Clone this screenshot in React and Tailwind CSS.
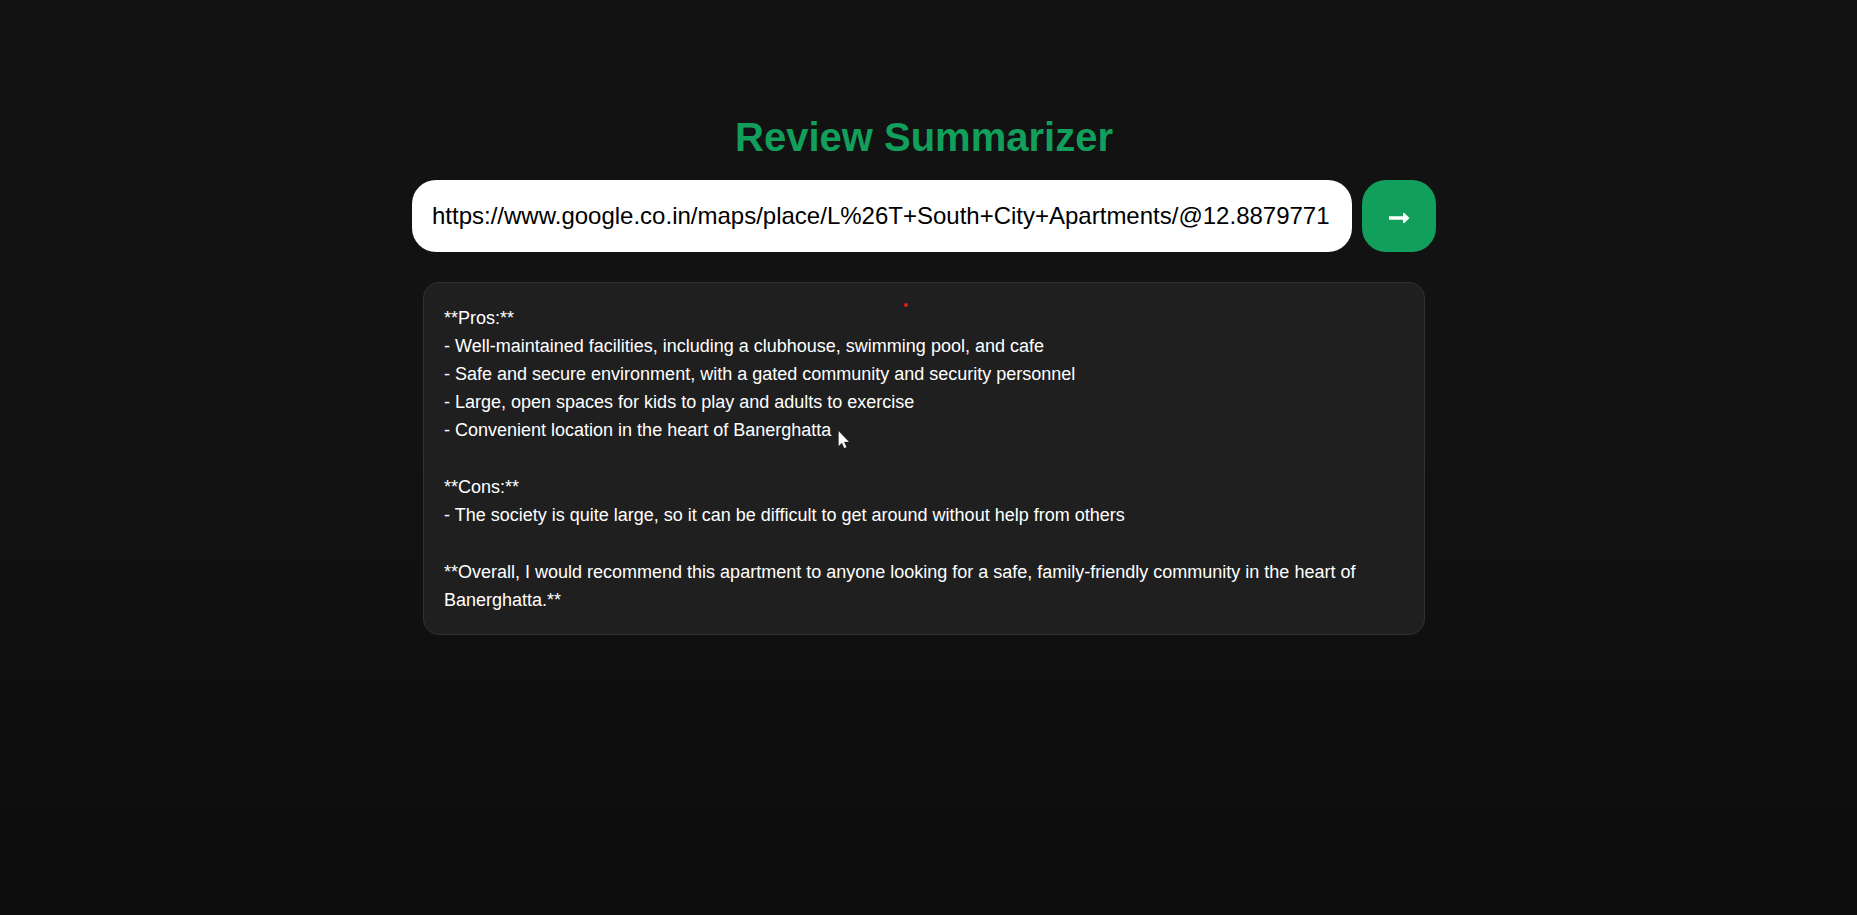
import { useState } from "react";

const PLACE_URL =
  "https://www.google.co.in/maps/place/L%26T+South+City+Apartments/@12.8879771,77.5946";

const SUMMARY = [
  [
    "**Pros:**",
    "- Well-maintained facilities, including a clubhouse, swimming pool, and cafe",
    "- Safe and secure environment, with a gated community and security personnel",
    "- Large, open spaces for kids to play and adults to exercise",
    "- Convenient location in the heart of Banerghatta",
  ],
  [
    "**Cons:**",
    "- The society is quite large, so it can be difficult to get around without help from others",
  ],
  [
    "**Overall, I would recommend this apartment to anyone looking for a safe, family-friendly community in the heart of Banerghatta.**",
  ],
];

function ArrowIcon() {
  return (
    <svg viewBox="0 0 22 12" className="mt-1 h-3 w-[22px]" fill="currentColor" aria-hidden="true">
      <path d="M1 4.2h14V1h1.3L21.5 6l-5.2 5H15V7.8H1z" />
    </svg>
  );
}

function Pointer() {
  return (
    <svg
      viewBox="0 0 12 19"
      className="pointer-events-none absolute left-[838px] top-[430px] h-[19px] w-3"
      aria-hidden="true"
    >
      <path d="M.5.8v15.4l3.4-3.2 2.3 5.3 2.4-1-2.3-5.2h4.9z" fill="#fff" stroke="#111" strokeWidth=".3" />
    </svg>
  );
}

export default function App() {
  const [url, setUrl] = useState(PLACE_URL);

  return (
    <div className="relative min-h-screen bg-linear-to-b from-[#121212] from-50% to-[#0c0c0c] px-4 pt-[113px] pr-[25px] font-['Liberation_Sans',Arial,sans-serif] text-white">
      <main className="mx-auto flex max-w-[1024px] flex-col">
        <h1 className="text-center text-[40px] leading-12 font-bold text-[#119f5b]">
          Review Summarizer
        </h1>
        <form className="mt-[19px] flex gap-2.5" onSubmit={(e) => e.preventDefault()}>
          <input
            type="text"
            aria-label="Place link"
            value={url}
            onChange={(e) => setUrl(e.target.value)}
            className="h-18 min-w-0 flex-1 rounded-3xl bg-white pr-[22px] pl-5 text-2xl text-black outline-none"
          />
          <button
            type="submit"
            aria-label="Summarize"
            className="flex h-18 w-[74px] shrink-0 items-center justify-center rounded-3xl bg-[#119f5b] text-white"
          >
            <ArrowIcon />
          </button>
        </form>
        <section className="mx-[11px] mt-[30px] flex flex-col gap-[29px] rounded-2xl border border-[#303030] bg-[#1f1f1f] px-5 pt-[21px] pb-5 text-lg leading-7">
          {SUMMARY.map((lines) => (
            <div key={lines[0]}>
              {lines.map((line) => (
                <p key={line}>{line}</p>
              ))}
            </div>
          ))}
        </section>
      </main>
      <span className="absolute left-[904px] top-[303px] size-1 rounded-full bg-[#e31b1b]" />
      <Pointer />
    </div>
  );
}
